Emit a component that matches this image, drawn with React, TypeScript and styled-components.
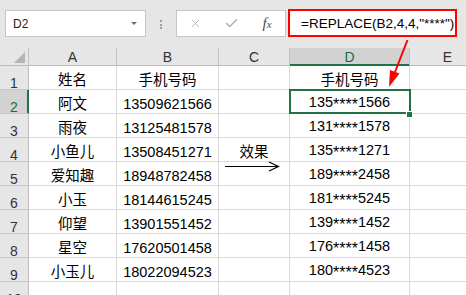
import React from "react";
import styled, { createGlobalStyle } from "styled-components";
import { X, Check } from "lucide-react";

const columns = ["A", "B", "C", "D", "E"];

const people = [
  ["阿文", "13509621566"],
  ["雨夜", "13125481578"],
  ["小鱼儿", "13508451271"],
  ["爱知趣", "18948782458"],
  ["小玉", "18144615245"],
  ["仰望", "13901551452"],
  ["星空", "17620501458"],
  ["小玉儿", "18022094523"],
];

const mask = (phone: string) => phone.slice(0, 3) + "****" + phone.slice(7);

// splits a masked number so the stars can sit lower, like the sheet font draws them
const Masked = ({ value }: { value: string }) => (
  <span>
    {value.split(/(\*+)/).map((part, i) =>
      part.startsWith("*") ? <Stars key={i}>{part}</Stars> : part
    )}
  </span>
);

const App = () => {
  const rows: string[][] = [
    ["姓名", "手机号码", "", "手机号码", ""],
    ...people.map(([name, phone], i) => [
      name,
      phone,
      i === 2 ? "效果" : "",
      mask(phone),
      "",
    ]),
    ["", "", "", "", ""],
  ];

  return (
    <>
      <GlobalStyle />
      <Window>
        <FormulaBar>
          <NameBox>
            D2
            <Caret />
          </NameBox>
          <Grip>
            <i />
            <i />
            <i />
          </Grip>
          <Buttons>
            <X size={13} strokeWidth={1.4} color="#a6a6a6" />
            <Check size={15} strokeWidth={2.2} color="#a6a6a6" />
            <Fx>
              f<small>x</small>
            </Fx>
          </Buttons>
          <FormulaInput>=REPLACE(B2,4,4,"****")</FormulaInput>
        </FormulaBar>

        <Sheet>
          <Corner />
          {columns.map((c) => (
            <ColHeader key={c} $active={c === "D"}>
              {c}
            </ColHeader>
          ))}
          {rows.map((row, r) => (
            <React.Fragment key={r}>
              <RowHeader $active={r === 1}>{r + 1}</RowHeader>
              {row.map((value, c) => (
                <Cell key={c} $selected={r === 1 && c === 3}>
                  {c === 3 && value.includes("*") ? (
                    <Masked value={value} />
                  ) : (
                    value
                  )}
                </Cell>
              ))}
            </React.Fragment>
          ))}
        </Sheet>

        <Annotations width="466" height="295" viewBox="0 0 466 295">
          <line x1="225" y1="166.5" x2="278" y2="166.5" stroke="#000" strokeWidth="1.2" />
          <polyline
            points="269,162 278.5,166.5 269,171"
            fill="none"
            stroke="#000"
            strokeWidth="1.2"
          />
          <line x1="407.5" y1="40" x2="395" y2="72" stroke="#ff0000" strokeWidth="2" />
          <polygon points="389,87 399.5,73.5 390,70" fill="#ff0000" />
        </Annotations>
      </Window>
    </>
  );
};

export default App;

const GlobalStyle = createGlobalStyle`
  html, body {
    margin: 0;
    padding: 0;
    background: #ffffff;
    overflow: hidden;
  }
  body {
    font-family: "Liberation Sans", "Noto Sans CJK SC", sans-serif;
    color: #000;
  }
`;

const Window = styled.div`
  position: relative;
  width: 466px;
  height: 295px;
  overflow: hidden;
  background: #ffffff;
`;

const FormulaBar = styled.div`
  display: flex;
  align-items: flex-start;
  height: 48px;
  box-sizing: border-box;
  padding: 10px 0 0 5px;
  background: #e6e6e6;
`;

const NameBox = styled.div`
  display: flex;
  align-items: center;
  justify-content: space-between;
  width: 141px;
  height: 27px;
  box-sizing: border-box;
  padding: 0 8px 0 7px;
  background: #fff;
  border: 1px solid #c6c6c6;
  font-size: 12px;
  color: #222;
`;

const Caret = styled.span`
  width: 0;
  height: 0;
  border-left: 3.5px solid transparent;
  border-right: 3.5px solid transparent;
  border-top: 3.5px solid #6d6d6d;
`;

const Grip = styled.div`
  display: flex;
  flex-direction: column;
  gap: 1.5px;
  margin: 10px 14px 0 14px;

  i {
    width: 2px;
    height: 2px;
    background: #9c9c9c;
  }
`;

const Buttons = styled.div`
  display: grid;
  grid-template-columns: repeat(3, 1fr);
  align-items: center;
  justify-items: center;
  width: 110px;
  height: 27px;
  box-sizing: border-box;
  background: #fff;
  border: 1px solid #c6c6c6;
`;

const Fx = styled.span`
  font-family: "Liberation Serif", serif;
  font-style: italic;
  font-size: 15px;
  color: #4a4a4a;

  small {
    font-size: 11px;
  }
`;

const FormulaInput = styled.div`
  display: flex;
  align-items: center;
  width: 169px;
  height: 28px;
  margin: -1px 0 0 2px;
  box-sizing: border-box;
  padding-left: 11px;
  background: #fff;
  border: 2px solid #ff0000;
  font-size: 13.5px;
  white-space: nowrap;
`;

const Sheet = styled.div`
  display: grid;
  grid-template-columns: 29px 88px 102px 71px 120px 76px;
  grid-template-rows: 18px;
  grid-auto-rows: 24px;
`;

const Corner = styled.div`
  position: relative;
  background: #e6e6e6;
  border-right: 1px solid #c4c4c4;
  border-bottom: 1px solid #bdbdbd;

  &::after {
    content: "";
    position: absolute;
    right: 3px;
    bottom: 2px;
    width: 0;
    height: 0;
    border-left: 11px solid transparent;
    border-bottom: 11px solid #b5b5b5;
  }
`;

const ColHeader = styled.div<{ $active?: boolean }>`
  display: flex;
  align-items: flex-end;
  justify-content: center;
  font-size: 14px;
  line-height: 15px;
  background: ${(p) => (p.$active ? "#d2d2d2" : "#e6e6e6")};
  color: ${(p) => (p.$active ? "#1e6b41" : "#333")};
  border-right: 1px solid #c4c4c4;
  border-bottom: 1px solid #bdbdbd;
  box-shadow: ${(p) => (p.$active ? "inset 0 -1px 0 #217346" : "none")};
  ${(p) => p.$active && "border-bottom-color: #217346;"}
`;

const RowHeader = styled.div<{ $active?: boolean }>`
  display: flex;
  align-items: flex-end;
  justify-content: center;
  font-size: 14px;
  line-height: 12px;
  background: ${(p) => (p.$active ? "#d2d2d2" : "#e6e6e6")};
  color: ${(p) => (p.$active ? "#1e6b41" : "#333")};
  border-right: 1px solid #bdbdbd;
  border-bottom: 1px solid #c8c8c8;
  box-shadow: ${(p) => (p.$active ? "inset -1px 0 0 #217346" : "none")};
  ${(p) => p.$active && "border-right-color: #217346;"}
`;

const Cell = styled.div<{ $selected?: boolean }>`
  position: relative;
  display: flex;
  align-items: flex-end;
  justify-content: center;
  font-size: 14.5px;
  line-height: 17px;
  white-space: nowrap;
  border-right: 1px solid #d9d9d9;
  border-bottom: 1px solid #d9d9d9;
  z-index: ${(p) => (p.$selected ? 2 : "auto")};

  ${(p) =>
    p.$selected &&
    `
    &::before {
      content: "";
      position: absolute;
      left: -1px;
      top: -1px;
      width: 122px;
      height: 25px;
      box-sizing: border-box;
      border: 2px solid #217346;
    }
    &::after {
      content: "";
      position: absolute;
      left: 116px;
      top: 21px;
      width: 5px;
      height: 5px;
      background: #217346;
      border: 1px solid #fff;
    }
  `}
`;

const Stars = styled.span`
  font-size: 16px;
  vertical-align: -3px;
`;

const Annotations = styled.svg`
  position: absolute;
  top: 0;
  left: 0;
  pointer-events: none;
`;
